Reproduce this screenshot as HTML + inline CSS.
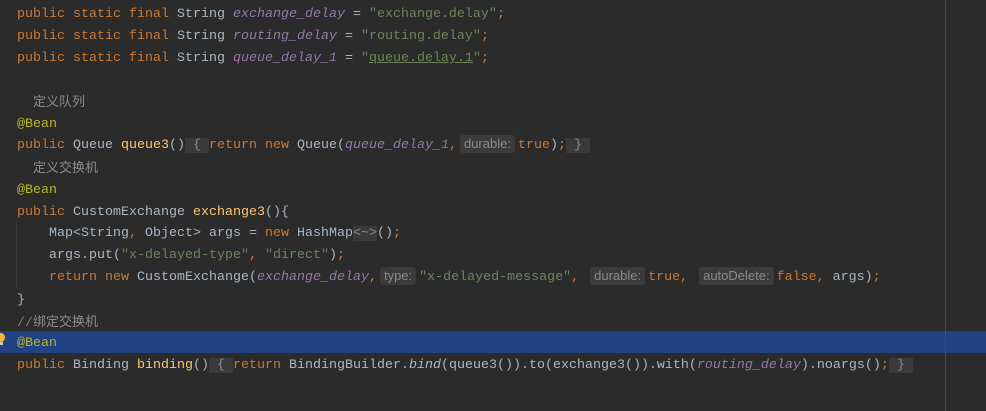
<!DOCTYPE html>
<html><head><meta charset="utf-8"><style>
html,body{margin:0;padding:0;width:986px;height:411px;overflow:hidden;background:#2b2b2b;}
.l{position:absolute;left:17px;height:22px;line-height:22px;white-space:pre;font-family:"Liberation Mono",monospace;font-size:13.33px;color:#a9b7c6;}
.k{color:#cc7832}.f{color:#9876aa;font-style:italic}.s{color:#6a8759}.a{color:#bbb529}.m{color:#ffc66d}.c{color:#808080}
.cn{font-family:"Liberation Sans","Noto Sans CJK SC",sans-serif;font-size:13px;color:#8c8c8c}
.h{display:inline-block;background:#3b3b3b;color:#8a8a8a;font-family:"Liberation Sans",sans-serif;font-size:13px;line-height:16px;padding:1px 4px;border-radius:3px;margin:0 3px 0 3px}
.fb{background:#3a3a3a;color:#8c8c8c}
</style></head><body>
<div style="position:absolute;left:0;top:331px;width:986px;height:22px;background:#214283"></div>
<div style="position:absolute;left:945px;top:0;width:1px;height:411px;background:#4a4a4a"></div>
<div style="position:absolute;left:16px;top:221px;width:1px;height:66px;background:#393939"></div>
<div style="position:absolute;left:-3px;top:333px;width:8px;height:9px;border-radius:50%;background:#f0b840"></div>
<div style="position:absolute;left:0;top:342px;width:3px;height:3px;background:#c8c8c8"></div>

<div class="l" style="top:4px"><span class="k">public static final </span>String <span class="f">exchange_delay</span> = <span class="s">"exchange.delay"</span><span class="k">;</span></div>
<div class="l" style="top:26px"><span class="k">public static final </span>String <span class="f">routing_delay</span> = <span class="s">"routing.delay"</span><span class="k">;</span></div>
<div class="l" style="top:48px"><span class="k">public static final </span>String <span class="f">queue_delay_1</span> = <span class="s">"<u>queue.delay.1</u>"</span><span class="k">;</span></div>
<div class="l" style="top:91px;left:33px"><span class="cn">定义队列</span></div>
<div class="l" style="top:114px"><span class="a">@Bean</span></div>
<div class="l" style="top:135px"><span class="k">public </span>Queue <span class="m">queue3</span>()<span class="fb"> { </span><span class="k">return new </span>Queue(<span class="f">queue_delay_1</span><span class="k">,</span><span class="h">durable:</span><span class="k">true</span>)<span class="k">;</span><span class="fb"> } </span></div>
<div class="l" style="top:157px;left:33px"><span class="cn">定义交换机</span></div>
<div class="l" style="top:180px"><span class="a">@Bean</span></div>
<div class="l" style="top:202px"><span class="k">public </span>CustomExchange <span class="m">exchange3</span>(){</div>
<div class="l" style="top:223px">    Map&lt;String<span class="k">, </span>Object&gt; args = <span class="k">new </span>HashMap<span style="background:#3a3a3a;color:#8c8c8c">&lt;~&gt;</span>()<span class="k">;</span></div>
<div class="l" style="top:245px">    args.put(<span class="s">"x-delayed-type"</span><span class="k">, </span><span class="s">"direct"</span>)<span class="k">;</span></div>
<div class="l" style="top:267px">    <span class="k">return new </span>CustomExchange(<span class="f">exchange_delay</span><span class="k">,</span><span class="h">type:</span><span class="s">"x-delayed-message"</span><span class="k">, </span><span class="h">durable:</span><span class="k">true, </span><span class="h">autoDelete:</span><span class="k">false, </span>args)<span class="k">;</span></div>
<div class="l" style="top:290px">}</div>
<div class="l" style="top:311px"><span class="c">//</span><span class="cn">绑定交换机</span></div>
<div class="l" style="top:333px"><span class="a">@Bean</span></div>
<div class="l" style="top:355px"><span class="k">public </span>Binding <span class="m">binding</span>()<span class="fb"> { </span><span class="k">return </span>BindingBuilder.<i>bind</i>(queue3()).to(exchange3()).with(<span class="f">routing_delay</span>).noargs()<span class="k">;</span><span class="fb"> } </span></div>
</body></html>
